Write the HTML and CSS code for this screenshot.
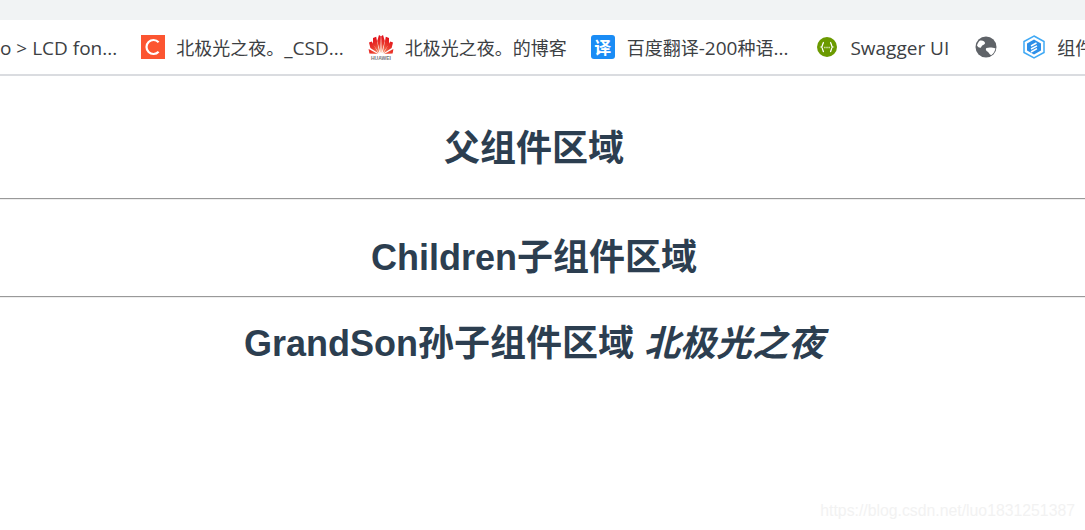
FILE: index.html
```html
<!DOCTYPE html>
<html lang="zh-CN">
<head>
    <meta charset="UTF-8">
    <meta name="viewport" content="width=device-width, initial-scale=1.0">
    <title>父组件区域</title>
    <link rel="stylesheet" href="styles.css">
</head>
<body>
    <div class="topstrip"></div>
    <nav class="bookmarks">
        <span class="mark"><span class="mark-text"><span class="latin">o &gt; LCD fon...</span></span></span>
        <span class="mark tight">
            <svg class="icon" viewBox="0 0 24 24"><rect width="24" height="24" fill="#fc5531"/><path d="M17.600 7.200A7 7 0 1 0 17.600 16.800" fill="none" stroke="#fff" stroke-width="2.200"/></svg>
            <span class="mark-text">北极光之夜。<span class="latin">_CSD...</span></span>
        </span>
        <span class="mark tight">
            <svg class="icon huawei" viewBox="0 0 26 26">
                <defs>
                    <radialGradient id="petal" gradientUnits="userSpaceOnUse" cx="13" cy="19" r="17">
                        <stop offset="0" stop-color="#f9a070"/>
                        <stop offset="0.55" stop-color="#ea3a2c"/>
                        <stop offset="1" stop-color="#e2101a"/>
                    </radialGradient>
                </defs>
                <g fill="url(#petal)">
                    <path d="M12.400 19 9.200 7 11 1 12.800 2.200Z"/>
                    <path d="M13.600 19 16.800 7 15 1 13.200 2.200Z"/>
                    <path d="M11.400 19.200 5 10.400 5 4 8.200 2.800Z"/>
                    <path d="M14.600 19.200 21 10.400 21 4 17.800 2.800Z"/>
                    <path d="M10.600 19.500 2.400 14 1 8.600 3.800 7.400Z"/>
                    <path d="M15.400 19.500 23.600 14 25 8.600 22.200 7.400Z"/>
                    <path d="M10 20 1.400 19.600 0.600 15Z"/>
                    <path d="M16 20 24.600 19.600 25.400 15Z"/>
                </g>
                <text class="huawei-text" x="13" y="25.500">HUAWEI</text>
            </svg>
            <span class="mark-text">北极光之夜。的博客</span>
        </span>
        <span class="mark">
            <span class="icon fanyi">译</span>
            <span class="mark-text">百度翻译<span class="latin">-200</span>种语<span class="latin">...</span></span>
        </span>
        <span class="mark swagger">
            <svg class="icon" viewBox="0 0 24 24">
                <circle cx="13" cy="12" r="10" fill="#6b9a00"/>
                <path d="M10 7.500C8 7.500 9.200 11.400 7.400 12 9.200 12.600 8 16.500 10 16.500M16 7.500C18 7.500 16.800 11.400 18.600 12 16.800 12.600 18 16.500 16 16.500" fill="none" stroke="#fff" stroke-width="1.300"/>
                <path d="M10.400 12.500h1M12.500 12.500h1M14.600 12.500h1" stroke="#fff" stroke-width="1.300"/>
            </svg>
            <span class="mark-text"><span class="latin">Swagger UI</span></span>
        </span>
        <span class="mark">
            <svg class="icon" viewBox="0 0 24 24">
                <circle cx="13" cy="12" r="10.500" fill="#5f6368"/>
                <path d="M7 5.500C10 5 12.500 6.500 12 8.500 11.600 10 9 9.800 8.500 11.500 8 13.500 5.500 13 4 10.500 4.500 8.500 5.500 6.800 7 5.500ZM13.500 13C16 12 20 12.500 22.500 13.500 22 16 20.500 18.500 18.500 20 16.500 20 16.500 18 15 17 13.500 16 12 14.500 13.500 13Z" fill="#fff"/>
            </svg>
        </span>
        <span class="mark">
            <svg class="icon" viewBox="0 0 24 24">
                <path d="M13 1 23 6.500V17.500L13 23 3 17.500V6.500Z" fill="#fff" stroke="#3fa9f5" stroke-width="1.500"/>
                <path d="M13 4.500 20 8.500V15.500L13 19.500 6 15.500V8.500Z" fill="#2d8fe8"/>
                <path d="M10 11 15.500 8M10 14 16 10.800M10 17 16 13.600" fill="none" stroke="#fff" stroke-width="1.500"/>
            </svg>
            <span class="mark-text">组件</span>
        </span>
    </nav>

    <h1 class="title parent">父组件区域</h1>
    <hr class="rule">
    <h1 class="title child">Children子组件区域</h1>
    <hr class="rule">
    <h1 class="title grandson">GrandSon孙子组件区域 <em>北极光之夜</em></h1>

    <div class="watermark">https://blog.csdn.net/luo1831251387</div>
</body>
</html>
```

FILE: styles.css
```css
html, body {
    height: 100%;
}
body {
    margin: 0;
    overflow: hidden;
    background-color: #fff;
    color: #2c3e50;
    font-family: "Liberation Sans", "Noto Sans CJK SC", sans-serif;
}
.topstrip {
    height: 20px;
    background-color: #f1f3f4;
}
.bookmarks {
    display: flex;
    align-items: center;
    gap: 24px;
    height: 54px;
    border-bottom: 2px solid #dadce0;
    white-space: nowrap;
    overflow: hidden;
    font-family: "Noto Sans CJK SC", sans-serif;
    font-size: 18px;
    color: #3c4043;
}
.latin {
    font-family: "Open Sans", sans-serif;
    font-size: 19px;
}
.mark {
    display: flex;
    align-items: center;
    gap: 12px;
    flex: none;
}
.tight {
    gap: 11px;
}
.swagger {
    margin-left: 2px;
}
.icon {
    display: block;
    width: 24px;
    height: 24px;
    flex: none;
}
.huawei {
    width: 26px;
    height: 26px;
}
.huawei-text {
    font-family: "Liberation Sans", sans-serif;
    font-size: 5px;
    font-weight: bold;
    text-anchor: middle;
    fill: #77777c;
}
.fanyi {
    background-color: #1a8cf5;
    border-radius: 3px;
    color: #fff;
    font-size: 17px;
    font-weight: bold;
    line-height: 24px;
    text-align: center;
}
.title {
    margin: 0;
    padding-right: 17px;
    font-size: 36px;
    line-height: 42px;
    font-weight: bold;
    text-align: center;
}
.parent {
    margin-top: 52px;
    margin-bottom: 28px;
}
.child {
    margin-top: 37px;
    margin-bottom: 17px;
}
.grandson {
    margin-top: 25px;
}
.rule {
    margin: 0;
    height: 0;
    border: 0;
    border-top: 1px solid #999;
    border-bottom: 1px solid #eee;
}
.watermark {
    position: absolute;
    right: 10px;
    bottom: 9px;
    font-size: 15.800px;
    line-height: 20px;
    color: #f2f2f2;
}
```
